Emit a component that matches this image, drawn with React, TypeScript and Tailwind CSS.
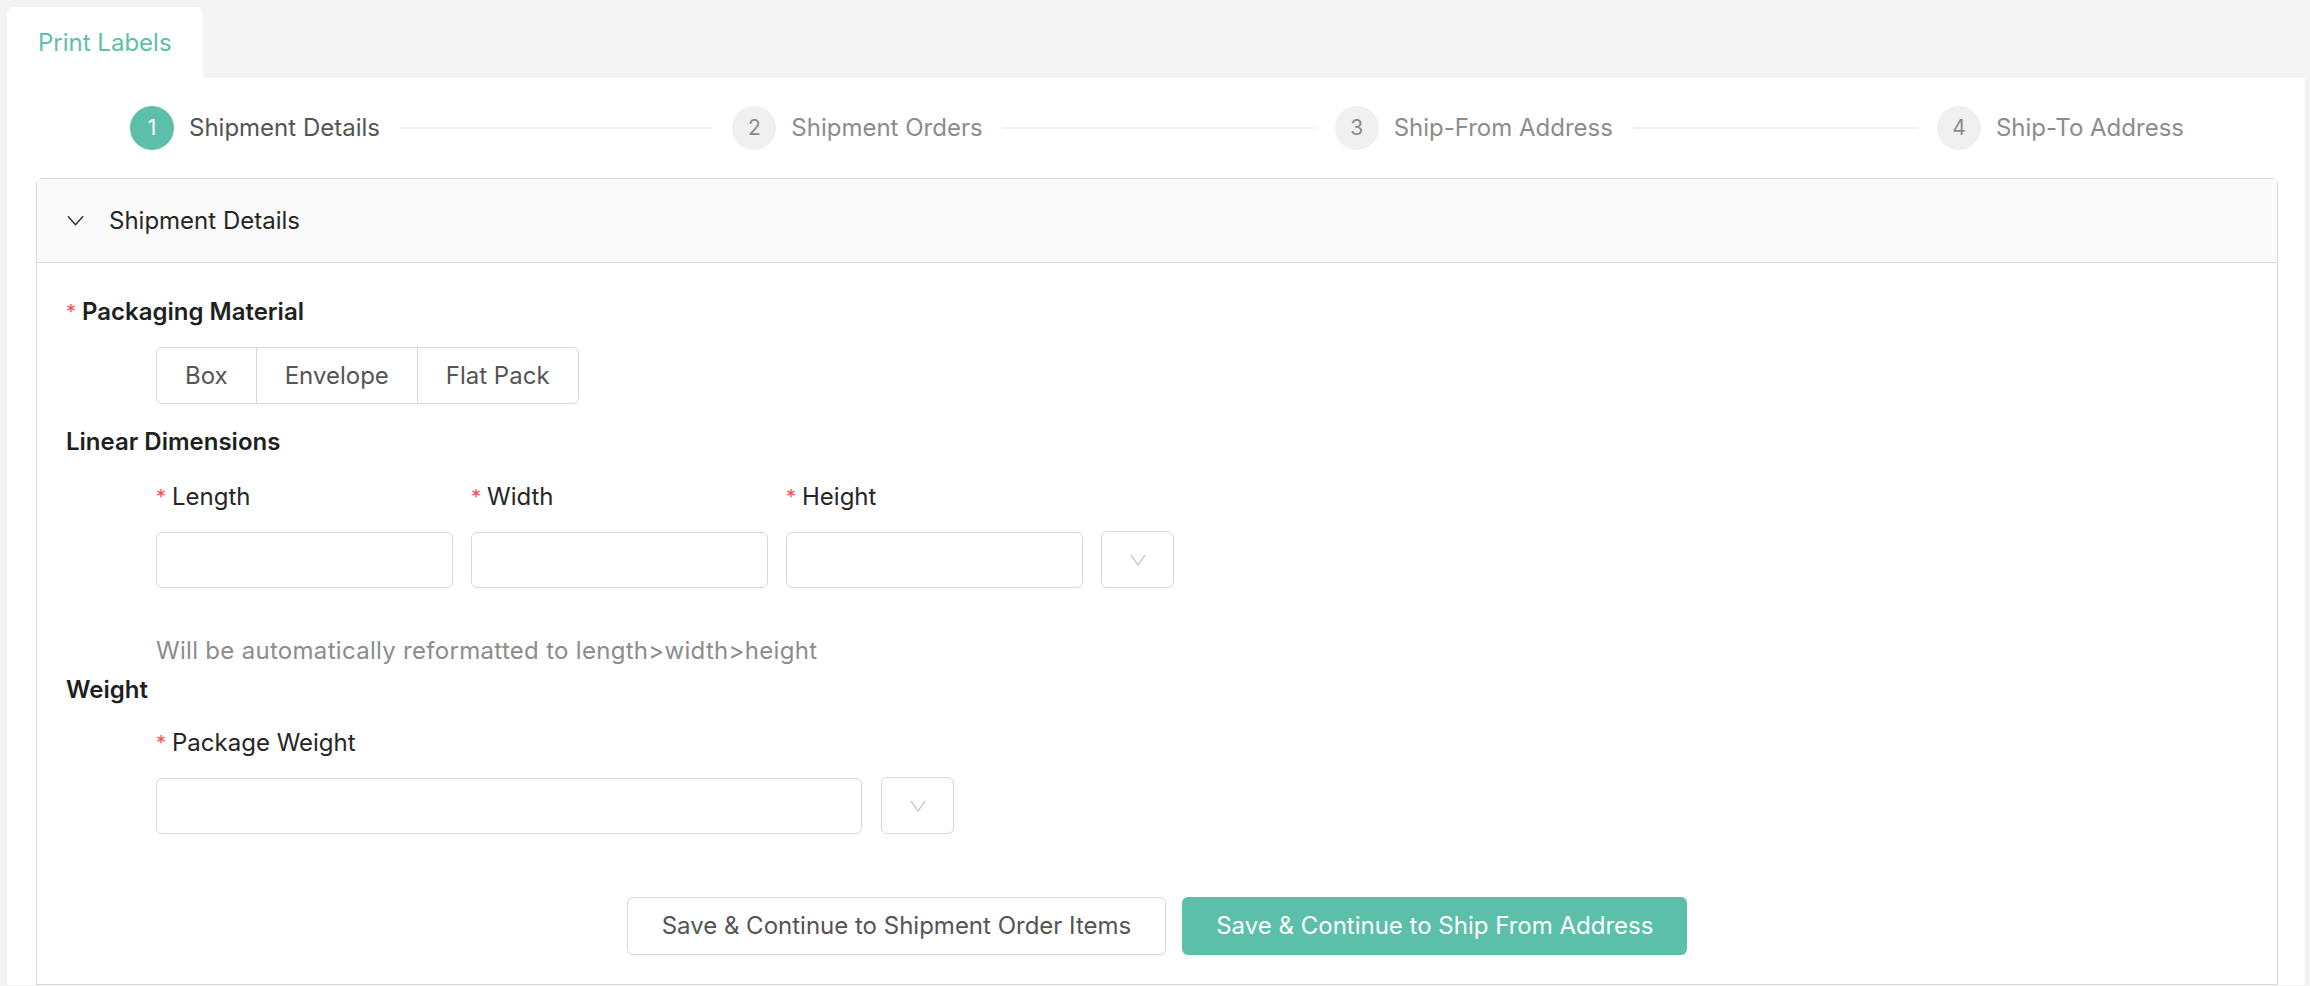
import React from 'react'

const steps = ['Shipment Details', 'Shipment Orders', 'Ship-From Address', 'Ship-To Address']

function ChevronDown({ className }: { className?: string }) {
  return (
    <svg viewBox="0 0 18 11" fill="none" className={className}>
      <polyline points="1,1 9,10 17,1" stroke="currentColor" strokeWidth="1.6" strokeLinejoin="round" />
    </svg>
  )
}

function Required({ children }: { children: React.ReactNode }) {
  return (
    <div className="flex h-[32px] items-center text-[24px] leading-[32px] text-[#262626]">
      <span className="w-[16px] text-[20px] leading-none text-[#ff4d4f]">*</span>
      <span>{children}</span>
    </div>
  )
}

function UnitSelect() {
  return (
    <div className="flex h-[57px] w-[73px] items-center justify-center rounded-[6px] border border-[#d9d9d9] bg-white text-[#bfbfbf]">
      <svg viewBox="0 0 16 12" fill="none" className="h-[12px] w-[16px]">
        <polyline points="1,1 8,11 15,1" stroke="currentColor" strokeWidth="1.2" />
      </svg>
    </div>
  )
}

export default function App() {
  return (
    <div className="min-h-screen bg-[#f4f4f4] pl-[7px] pr-[5px] pt-[7px] font-['Inter',sans-serif]">
      <div className="flex">
        <div className="flex h-[71px] items-center rounded-t-[8px] bg-white px-[31px] text-[24px] text-[#5bbfaa]">
          Print Labels
        </div>
      </div>

      <div className="bg-white pl-[29px] pr-[27px]">
        {/* steps */}
        <div className="flex items-center px-[94px] py-[28px]">
          {steps.map((label, i) => {
            const active = i === 0
            const last = i === steps.length - 1
            return (
              <div key={label} className={last ? 'flex flex-none items-center' : 'flex min-w-0 flex-1 items-center'}>
                <div
                  className={
                    active
                      ? 'flex h-[44px] w-[44px] flex-none items-center justify-center rounded-full bg-[#5bbfaa] text-[21px] text-white'
                      : 'flex h-[44px] w-[44px] flex-none items-center justify-center rounded-full bg-[#f0f0f0] text-[21px] text-[#8c8c8c]'
                  }
                >
                  {i + 1}
                </div>
                <span
                  className={
                    active
                      ? 'ml-[15px] whitespace-nowrap text-[24px] text-[#545454]'
                      : 'ml-[15px] whitespace-nowrap text-[24px] text-[#8c8c8c]'
                  }
                >
                  {label}
                </span>
                {!last && <div className="mx-[20px] h-[2px] flex-1 bg-[#f0f0f0]" />}
              </div>
            )
          })}
        </div>

        {/* accordion */}
        <div className="rounded-t-[6px] border border-b-0 border-[#d9d9d9]">
          <div className="flex h-[84px] items-center border-b border-[#d9d9d9] bg-[#fafafa] px-[30px]">
            <ChevronDown className="h-[11px] w-[17px] text-[#333]" />
            <span className="ml-[25px] text-[24px] text-[#262626]">Shipment Details</span>
          </div>

          <div className="border-b border-[#d9d9d9] pb-[29px] pl-[29px] pr-[29px] pt-[33px]">
            <div className="flex h-[32px] items-center text-[24px] font-semibold leading-[32px] text-[#1f1f1f]">
              <span className="w-[16px] text-[20px] font-normal leading-none text-[#ff4d4f]">*</span>
              <span>Packaging Material</span>
            </div>

            <div className="ml-[90px] mt-[19px] flex h-[57px] w-fit rounded-[6px] border border-[#d9d9d9] text-[24px] text-[#555]">
              <div className="flex items-center px-[28px]">Box</div>
              <div className="flex items-center border-l border-[#d9d9d9] px-[28px]">Envelope</div>
              <div className="flex items-center border-l border-[#d9d9d9] px-[28px]">Flat Pack</div>
            </div>

            <div className="mt-[22px] text-[24px] font-semibold leading-[32px] text-[#1f1f1f]">Linear Dimensions</div>

            <div className="ml-[90px] mt-[23px] flex gap-[18px]">
              {['Length', 'Width', 'Height'].map((f) => (
                <div key={f} className="w-[297px]">
                  <Required>{f}</Required>
                </div>
              ))}
            </div>
            <div className="ml-[90px] mt-[18px] flex items-center gap-[18px]">
              <div className="h-[56px] w-[297px] rounded-[6px] border border-[#d9d9d9]" />
              <div className="h-[56px] w-[297px] rounded-[6px] border border-[#d9d9d9]" />
              <div className="h-[56px] w-[297px] rounded-[6px] border border-[#d9d9d9]" />
              <UnitSelect />
            </div>

            <div className="ml-[90px] mt-[47px] text-[24px] leading-[32px] tracking-[0.3px] text-[#8c8c8c]">
              Will be automatically reformatted to length&gt;width&gt;height
            </div>

            <div className="mt-[7px] text-[24px] font-semibold leading-[32px] text-[#1f1f1f]">Weight</div>

            <div className="ml-[90px] mt-[21px]">
              <Required>Package Weight</Required>
            </div>
            <div className="ml-[90px] mt-[18px] flex items-center gap-[19px]">
              <div className="h-[56px] w-[706px] rounded-[6px] border border-[#d9d9d9]" />
              <UnitSelect />
            </div>

            <div className="mt-[63px] flex justify-center gap-[16px]">
              <button className="h-[58px] rounded-[6px] border border-[#d9d9d9] bg-white px-[34px] text-[24px] text-[#545454] shadow-[0_2px_0_rgba(0,0,0,0.02)]">
                Save &amp; Continue to Shipment Order Items
              </button>
              <button className="h-[58px] rounded-[6px] bg-[#5bbfaa] px-[34px] text-[24px] text-white">
                Save &amp; Continue to Ship From Address
              </button>
            </div>
          </div>
        </div>
      </div>
    </div>
  )
}
